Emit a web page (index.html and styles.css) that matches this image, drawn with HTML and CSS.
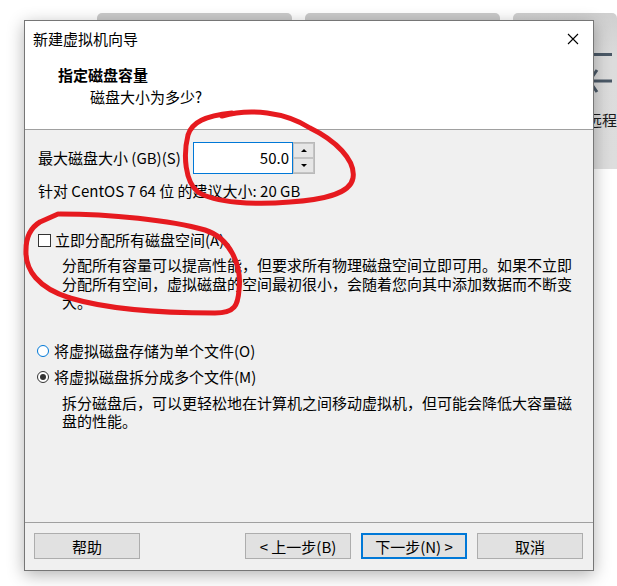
FILE: index.html
```html
<!DOCTYPE html>
<html lang="zh-CN">
<head>
    <meta charset="UTF-8">
    <meta name="viewport" content="width=device-width, initial-scale=1.0">
    <title>新建虚拟机向导</title>
    <link rel="stylesheet" href="styles.css">
</head>
<body>
    <div class="app">
        <div class="tabs">
            <div class="tab"></div>
            <div class="tab"></div>
            <div class="tab tab-last">
                <div class="tool">
                    <svg class="tool-icon" width="24" height="45" viewBox="0 0 24 45">
                        <line x1="0" y1="4.5" x2="24" y2="4.5" stroke="#4b5967" stroke-width="3"/>
                        <path d="M9 20 L1.5 31 L9 42 M1.5 31 L24 31" fill="none" stroke="#4b5967" stroke-width="3"/>
                    </svg>
                    <span class="tool-label">远程</span>
                </div>
            </div>
        </div>
    </div>

    <div class="dialog">
        <div class="dialog-top">
            <div class="titlebar">
                <span class="title">新建虚拟机向导</span>
                <svg class="close" width="12" height="12" viewBox="0 0 12 12">
                    <path d="M1 1 L11 11 M11 1 L1 11" stroke="#000" stroke-width="1.1"/>
                </svg>
            </div>
            <div class="header">
                <div class="heading">指定磁盘容量</div>
                <div class="subheading">磁盘大小为多少?</div>
            </div>
        </div>

        <div class="dialog-body">
            <div class="spin-row">
                <span class="spin-label">最大磁盘大小 (GB)(S)</span>
                <div class="spin-input">50.0</div>
                <div class="spin-buttons">
                    <div class="spin-btn"><span class="arrow-up"></span></div>
                    <div class="spin-btn"><span class="arrow-down"></span></div>
                </div>
            </div>
            <div class="hint">针对 CentOS 7 64 位 的建议大小: 20 GB</div>

            <div class="option check-row">
                <span class="checkbox"></span>
                <span>立即分配所有磁盘空间(A)。</span>
            </div>
            <div class="desc">分配所有容量可以提高性能，但要求所有物理磁盘空间立即可用。如果不立即分配所有空间，虚拟磁盘的空间最初很小，会随着您向其中添加数据而不断变大。</div>

            <div class="option radio-row first-radio">
                <span class="radio"></span>
                <span>将虚拟磁盘存储为单个文件(O)</span>
            </div>
            <div class="option radio-row">
                <span class="radio checked"></span>
                <span>将虚拟磁盘拆分成多个文件(M)</span>
            </div>
            <div class="desc desc-split">拆分磁盘后，可以更轻松地在计算机之间移动虚拟机，但可能会降低大容量磁盘的性能。</div>
        </div>

        <div class="dialog-footer">
            <button class="btn">帮助</button>
            <div class="spacer"></div>
            <button class="btn">&lt; 上一步(B)</button>
            <button class="btn btn-primary">下一步(N) &gt;</button>
            <button class="btn">取消</button>
        </div>
    </div>

    <svg class="marks" width="617" height="586" viewBox="0 0 617 586">
        <path d="M222 116 C250 108, 285 112, 310 128 C335 140, 356 160, 353 178 C350 195, 320 200, 290 202 C255 205, 215 203, 198 192 C185 182, 183 155, 188 135 C192 122, 205 116, 232 113"/>
        <path d="M60 214 C110 214, 170 220, 205 230 C230 238, 242 265, 239 290 C238 305, 235 313, 215 313 C170 313, 110 310, 70 298 C38 288, 25 270, 26 250 C26 238, 30 228, 40 222 L58 214"/>
    </svg>
</body>
</html>
```

FILE: styles.css
```css
html, body {
    margin: 0;
    height: 586px;
    overflow: hidden;
}
body {
    background-color: #ffffff;
    font-family: "Noto Sans CJK SC", "Microsoft YaHei", sans-serif;
    font-size: 15px;
    line-height: 18px;
    color: #000;
}

/* background app */
.tabs {
    display: flex;
    gap: 13px;
    padding: 13px 0 0 97px;
}
.tab {
    width: 198px;
    height: 30px;
    background-color: #cbcbcb;
    border-radius: 5px 5px 0 0;
}
.tab-last {
    flex: 1;
    height: 156px;
    background: linear-gradient(#cfcfcf, #dcdcdc 30%, #dddddd);
}
.tool {
    padding: 37px 0 0 75px;
}
.tool-icon {
    display: block;
}
.tool-label {
    display: block;
    margin-top: 16px;
    margin-left: -1px;
    white-space: nowrap;
    color: #1a1a1a;
}

/* dialog window */
.dialog {
    position: absolute;
    left: 24px;
    top: 20px;
    width: 570px;
    height: 551px;
    box-sizing: border-box;
    border: 1px solid #767676;
    background-color: #f0f0f0;
    display: flex;
    flex-direction: column;
    box-shadow: 0 4px 16px rgba(0, 0, 0, 0.3);
}
.dialog-top {
    height: 109px;
    box-sizing: border-box;
    background-color: #ffffff;
    border-bottom: 1px solid #a0a0a0;
}
.titlebar {
    height: 36px;
    display: flex;
    align-items: center;
    justify-content: space-between;
    padding: 0 14px 0 8px;
}
.close {
    display: block;
}
.header {
    padding: 9px 0 0 33px;
}
.heading {
    font-weight: bold;
}
.subheading {
    margin: 4px 0 0 32px;
}

.dialog-body {
    flex: 1;
    padding: 0 13px;
}
.spin-row {
    display: flex;
    align-items: center;
    height: 32px;
    margin-top: 12px;
}
.spin-label {
    width: 155px;
}
.spin-input {
    width: 100px;
    height: 32px;
    box-sizing: border-box;
    border: 1px solid #0078d7;
    background-color: #ffffff;
    text-align: right;
    padding: 6px 3px 0 0;
}
.spin-buttons {
    width: 22px;
    height: 32px;
    box-sizing: border-box;
    border: 1px solid #b9b9b9;
    border-left: none;
    display: flex;
    flex-direction: column;
}
.spin-btn {
    flex: 1;
    background-color: #e6e6e6;
    border: 1px solid #c4c4c4;
    display: flex;
    align-items: center;
    justify-content: center;
}
.arrow-up,
.arrow-down {
    width: 0;
    height: 0;
    border-left: 3px solid transparent;
    border-right: 3px solid transparent;
}
.arrow-up {
    border-bottom: 3px solid #000;
}
.arrow-down {
    border-top: 3px solid #000;
}

.hint {
    margin-top: 8px;
}

.option {
    display: flex;
    align-items: center;
    height: 18px;
}
.check-row {
    margin-top: 31px;
}
.checkbox {
    width: 13px;
    height: 13px;
    box-sizing: border-box;
    border: 1px solid #333333;
    background-color: #ffffff;
    margin: 0 4px 0 0;
}
.desc {
    width: 512px;
    margin: 7px 0 0 24px;
    line-height: 18.5px;
}
.first-radio {
    margin-top: 30px;
}
.radio-row + .radio-row {
    margin-top: 8px;
}
.radio {
    width: 12px;
    height: 12px;
    box-sizing: border-box;
    border: 1px solid #0078d7;
    border-radius: 50%;
    background-color: #ffffff;
    margin: 0 5px 0 -1px;
    display: flex;
    align-items: center;
    justify-content: center;
}
.radio.checked {
    border-color: #333333;
}
.radio.checked::after {
    content: "";
    width: 6px;
    height: 6px;
    border-radius: 50%;
    background-color: #333333;
}
.desc-split {
    margin-top: 8px;
}

.dialog-footer {
    display: flex;
    gap: 10px;
    border-top: 1px solid #a0a0a0;
    padding: 10px 10px 11px 9px;
}
.spacer {
    flex: 1;
}
.btn {
    width: 106px;
    height: 26px;
    box-sizing: border-box;
    background-color: #e1e1e1;
    border: 1px solid #adadad;
    font-family: inherit;
    font-size: 15px;
    color: #000;
    padding: 0;
}
.btn-primary {
    border: 2px solid #0078d7;
}

/* red hand-drawn marks */
.marks {
    position: absolute;
    left: 0;
    top: 0;
    pointer-events: none;
}
.marks path {
    fill: none;
    stroke: #e61a1f;
    stroke-width: 5;
    stroke-linecap: round;
    stroke-linejoin: round;
}
```
